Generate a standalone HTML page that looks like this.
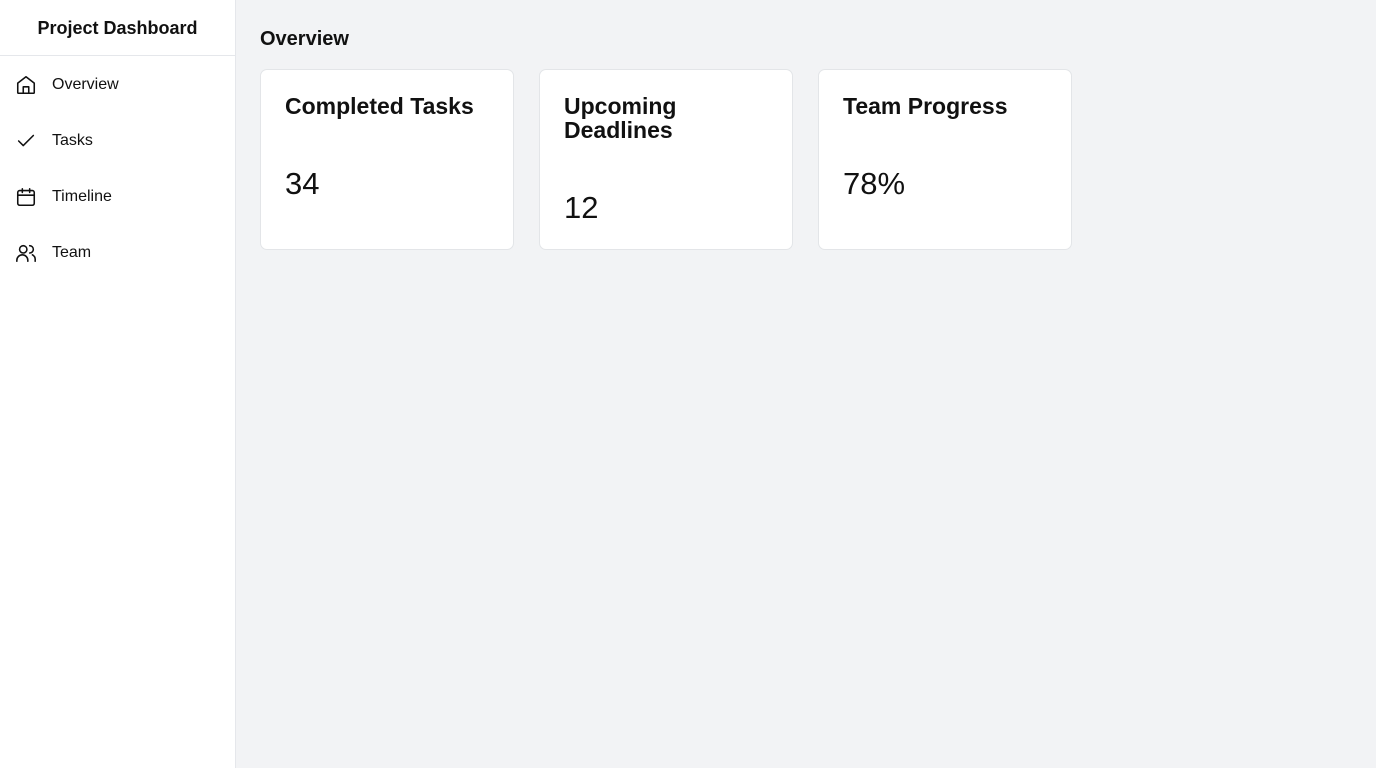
<!DOCTYPE html>
<html><head><style>
*{margin:0;padding:0;box-sizing:border-box}
body{width:1376px;height:768px;background:#f2f3f5;font-family:"Liberation Sans",sans-serif;color:#111;position:relative;overflow:hidden}
.side{position:absolute;left:0;top:0;width:236px;height:768px;background:#fff;border-right:1px solid #e5e7eb}
.hdr{height:56px;border-bottom:1px solid #e5e7eb;text-align:center;font-weight:bold;font-size:18px;line-height:56px}
.item{position:absolute;left:15px;height:24px;display:flex;align-items:center;font-size:16px}
.item svg{width:22px;height:22px;margin-right:15px;fill:none;stroke:#111;stroke-width:1.7;stroke-linecap:round;stroke-linejoin:round}
h2{position:absolute;left:260px;top:28px;font-size:20px;font-weight:bold}
.card{position:absolute;top:69px;width:254px;height:181px;background:#fff;border:1px solid #e3e5e8;border-radius:7px;padding:24px 24px}
.card h3{font-size:23px;font-weight:bold;line-height:24px}
.card .n{font-size:31px;position:absolute;left:24px}
</style></head><body>
<div class="side">
<div class="hdr">Project Dashboard</div>
<div class="item" style="top:73px"><svg viewBox="0 0 24 24"><path d="M3 10l9-7 9 7v10a1 1 0 0 1-1 1H4a1 1 0 0 1-1-1z"/><path d="M9 21v-7h6v7"/></svg>Overview</div>
<div class="item" style="top:129px"><svg viewBox="0 0 24 24"><path d="M4 12l5 5L20 6"/></svg>Tasks</div>
<div class="item" style="top:185px"><svg viewBox="0 0 24 24"><rect x="3" y="5" width="18" height="16" rx="2"/><path d="M3 10h18M8 3v4M16 3v4"/></svg>Timeline</div>
<div class="item" style="top:241px"><svg viewBox="0 0 24 24"><circle cx="9" cy="8" r="4"/><path d="M2 21v-1a6 6 0 0 1 12 0v1"/><path d="M16 4a4 4 0 0 1 0 8M19 14a6 6 0 0 1 3 6v1"/></svg>Team</div>
</div>
<h2>Overview</h2>
<div class="card" style="left:260px"><h3>Completed Tasks</h3><div class="n" style="top:96px">34</div></div>
<div class="card" style="left:539px"><h3>Upcoming<br>Deadlines</h3><div class="n" style="top:120px">12</div></div>
<div class="card" style="left:818px"><h3>Team Progress</h3><div class="n" style="top:96px">78%</div></div>
</body></html>
